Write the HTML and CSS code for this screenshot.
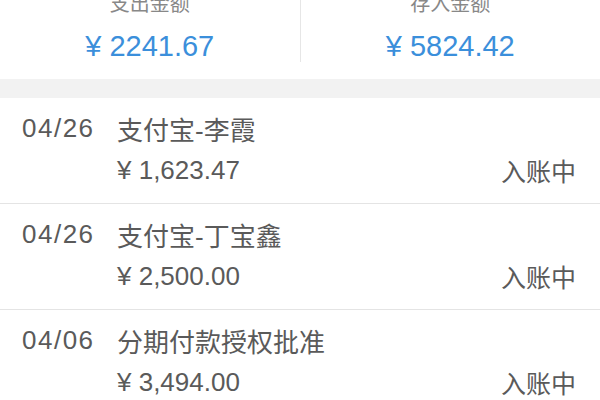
FILE: index.html
```html
<!DOCTYPE html>
<html lang="zh-CN">
<head>
  <meta charset="UTF-8">
  <title>账单明细</title>
  <link rel="stylesheet" href="styles.css">
</head>
<body>
  <div class="summary">
    <div class="summary-col">
      <div class="summary-label">支出金额</div>
      <div class="summary-amount">¥ 2241.67</div>
    </div>
    <div class="summary-col">
      <div class="summary-label">存入金额</div>
      <div class="summary-amount">¥ 5824.42</div>
    </div>
  </div>

  <div class="gap"></div>

  <ul class="records">
    <li class="record">
      <div class="record-top">
        <span class="date">04/26</span>
        <span class="title">支付宝-李霞</span>
      </div>
      <div class="record-bottom">
        <span class="money">¥ 1,623.47</span>
        <span class="status">入账中</span>
      </div>
    </li>
    <li class="record">
      <div class="record-top">
        <span class="date">04/26</span>
        <span class="title">支付宝-丁宝鑫</span>
      </div>
      <div class="record-bottom">
        <span class="money">¥ 2,500.00</span>
        <span class="status">入账中</span>
      </div>
    </li>
    <li class="record">
      <div class="record-top">
        <span class="date">04/06</span>
        <span class="title">分期付款授权批准</span>
      </div>
      <div class="record-bottom">
        <span class="money">¥ 3,494.00</span>
        <span class="status">入账中</span>
      </div>
    </li>
  </ul>
</body>
</html>
```

FILE: styles.css
```css
* {
  box-sizing: border-box;
  margin: 0;
  padding: 0;
}

body {
  font-family: "Liberation Sans", "Noto Sans CJK SC", sans-serif;
  background: #fff;
  color: #5a5a5a;
  width: 600px;
  height: 400px;
  overflow: hidden;
}

.summary {
  display: flex;
  padding-bottom: 17px;
  background: #fff;
}

.summary-col {
  flex: 1;
  text-align: center;
}

.summary-col:first-child {
  border-right: 1px solid #e6e6e6;
}

.summary-label {
  margin-top: -10px;
  font-size: 20px;
  line-height: 28px;
  color: #888;
}

.summary-amount {
  margin-top: 12px;
  font-size: 29px;
  line-height: 32px;
  color: #3b8fdb;
}

.gap {
  height: 19px;
  background: #f2f2f2;
}

.records {
  list-style: none;
}

.record {
  padding: 13px 24px 16px 22px;
  border-bottom: 1px solid #e4e4e4;
}

.record-top,
.record-bottom {
  display: flex;
  align-items: center;
  height: 34px;
  font-size: 26px;
}

.record-bottom {
  margin-top: 8px;
  padding-left: 95px;
}

.date {
  width: 95px;
  letter-spacing: 1.5px;
}

.money {
  flex: 1;
}

.status {
  font-size: 25px;
}
```
